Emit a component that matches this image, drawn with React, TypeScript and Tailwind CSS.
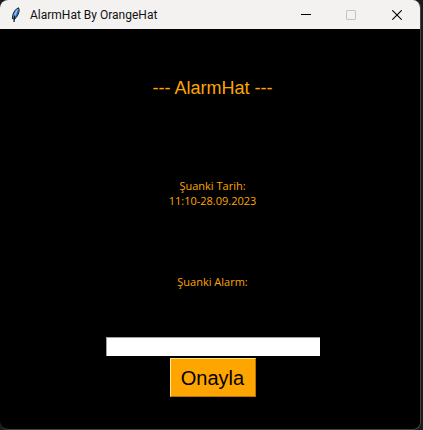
import { useState } from "react";

function FeatherIcon() {
  return (
    <svg viewBox="0 0 16 16" className="h-4 w-4" aria-hidden="true">
      <path d="M10.5 0.8C8 1.8 5.4 4.8 4.8 8.2L4.4 11.6L6.4 12.2C9.2 10.2 11 6.4 11.2 3Z" fill="#4f9be8" stroke="#15171c" strokeWidth="1" />
      <path d="M9.6 2.6C8 5 6.6 8 6.2 11" fill="none" stroke="#a9d2fa" strokeWidth="1" />
      <path d="M10.1 3.6C9.8 7 8.2 10 6.5 11.6" fill="none" stroke="#1c4f96" strokeWidth="1" />
      <path d="M6.6 8.5L6 15" stroke="#111" strokeWidth="1.2" />
    </svg>
  );
}

function TitleBar() {
  return (
    <header className="flex h-[29px] items-center bg-[#f3f2f1] pl-2">
      <FeatherIcon />
      <h1 className="ml-1.5 flex-1 whitespace-nowrap font-[Roboto,'Open_Sans',sans-serif] text-[12px] leading-4 text-[#111]">
        AlarmHat By OrangeHat
      </h1>
      <button aria-label="Minimize" className="flex h-full w-[45px] items-center justify-center">
        <svg viewBox="0 0 10 10" className="h-2.5 w-2.5" shapeRendering="crispEdges">
          <path d="M0 4.5H10" stroke="#000" />
        </svg>
      </button>
      <button aria-label="Maximize" disabled className="flex h-full w-[45px] items-center justify-center">
        <svg viewBox="0 0 10 10" className="h-2.5 w-2.5">
          <rect x="0.5" y="0.5" width="9" height="9" rx="0.6" fill="none" stroke="#c4c3c2" />
        </svg>
      </button>
      <button aria-label="Close" className="flex h-full w-[47px] items-center justify-center">
        <svg viewBox="0 0 10 10" className="h-2.5 w-2.5">
          <path d="M0.3 0.3L9.7 9.7M9.7 0.3L0.3 9.7" stroke="#000" strokeWidth="1.1" />
        </svg>
      </button>
    </header>
  );
}

export default function App() {
  const [draft, setDraft] = useState("");
  const [alarm, setAlarm] = useState("");

  return (
    <div className="min-h-screen bg-[#1b1b1c] pr-0.5">
      <div className="flex min-h-screen flex-col overflow-hidden rounded-lg border-r border-b border-[#434343] bg-black">
        <TitleBar />
        <main className="flex flex-1 flex-col items-center pt-12 pb-8 pl-[5px] text-center text-[orange]">
          <h2 className="font-['Liberation_Sans',Arial,sans-serif] text-[18px] leading-[22px]">--- AlarmHat ---</h2>
          <p className="mt-[79px] font-['Open_Sans','Noto_Sans',sans-serif] text-[11px] leading-[15px]">
            Şuanki Tarih:
            <br />
            11:10-28.09.2023
          </p>
          <p className="mt-[66px] font-['Open_Sans','Noto_Sans',sans-serif] text-[11px] leading-[15px]">
            Şuanki Alarm:{alarm}
          </p>
          <form
            className="mt-12 flex flex-col items-center gap-0.5"
            onSubmit={(event) => {
              event.preventDefault();
              setAlarm(draft);
            }}
          >
            <input
              type="text"
              aria-label="Alarm"
              value={draft}
              onChange={(event) => setDraft(event.target.value)}
              className="h-[19px] w-[214px] border-t border-l border-[#a0a0a0] bg-white px-0.5 text-[12px] text-black outline-none"
            />
            <button
              type="submit"
              className="h-[39px] w-[86px] border border-t-[#ffe680] border-r-[#b37400] border-b-[#b37400] border-l-[#ffe680] bg-[orange] font-['Liberation_Sans',Arial,sans-serif] text-[20px] leading-6 text-black"
            >
              Onayla
            </button>
          </form>
        </main>
      </div>
    </div>
  );
}
